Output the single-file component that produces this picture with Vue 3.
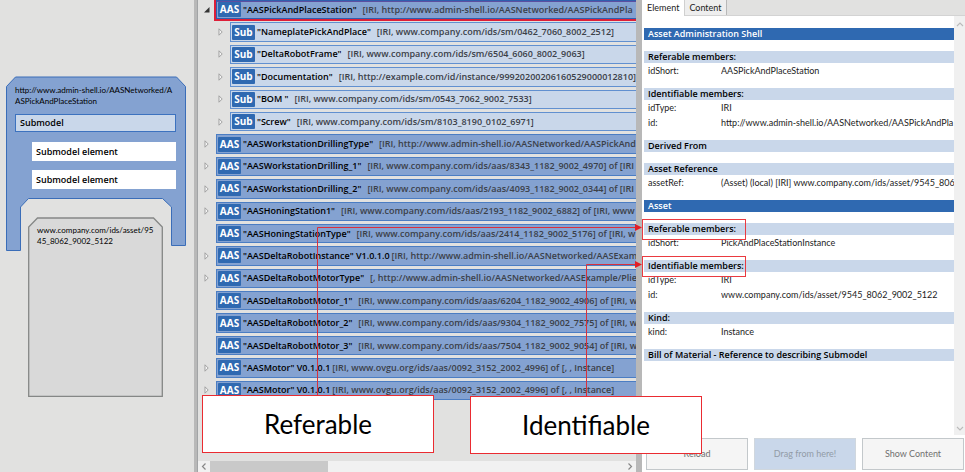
<script setup>
import { ref } from 'vue'

const tree = [
  { kind: 'AAS', name: '"AASPickAndPlaceStation"', info: '[IRI, http://www.admin-shell.io/AASNetworked/AASPickAndPla', state: 'open', selected: true },
  { kind: 'Sub', name: '"NameplatePickAndPlace"', info: '[IRI, www.company.com/ids/sm/0462_7060_8002_2512]', state: 'closed' },
  { kind: 'Sub', name: '"DeltaRobotFrame"', info: '[IRI, www.company.com/ids/sm/6504_6060_8002_9063]', state: 'closed' },
  { kind: 'Sub', name: '"Documentation"', info: '[IRI, http://example.com/id/instance/99920200206160529000012810]', state: 'closed' },
  { kind: 'Sub', name: '"BOM "', info: '[IRI, www.company.com/ids/sm/0543_7062_9002_7533]', state: 'closed' },
  { kind: 'Sub', name: '"Screw"', info: '[IRI, www.company.com/ids/sm/8103_8190_0102_6971]', state: 'closed' },
  { kind: 'AAS', name: '"AASWorkstationDrillingType"', info: '[IRI, http://www.admin-shell.io/AASNetworked/AASPickAnd', state: 'closed' },
  { kind: 'AAS', name: '"AASWorkstationDrilling_1"', info: '[IRI, www.company.com/ids/aas/8343_1182_9002_4970] of [IRI', state: 'closed' },
  { kind: 'AAS', name: '"AASWorkstationDrilling_2"', info: '[IRI, www.company.com/ids/aas/4093_1182_9002_0344] of [IRI', state: 'closed' },
  { kind: 'AAS', name: '"AASHoningStation1"', info: '[IRI, www.company.com/ids/aas/2193_1182_9002_6882] of [IRI, www', state: 'closed' },
  { kind: 'AAS', name: '"AASHoningStationType"', info: '[IRI, www.company.com/ids/aas/2414_1182_9002_5176] of [IRI, w', state: 'leaf' },
  { kind: 'AAS', name: '"AASDeltaRobotInstance" V1.0.1.0', tight: true, info: '[IRI, http://www.admin-shell.io/AASNetworked/AASExam', state: 'closed' },
  { kind: 'AAS', name: '"AASDeltaRobotMotorType"', info: '[, http://www.admin-shell.io/AASNetworked/AASExample/Plie', state: 'closed' },
  { kind: 'AAS', name: '"AASDeltaRobotMotor_1"', info: '[IRI, www.company.com/ids/aas/6204_1182_9002_4906] of [IRI, w', state: 'leaf' },
  { kind: 'AAS', name: '"AASDeltaRobotMotor_2"', info: '[IRI, www.company.com/ids/aas/9304_1182_9002_7575] of [IRI, w', state: 'leaf' },
  { kind: 'AAS', name: '"AASDeltaRobotMotor_3"', info: '[IRI, www.company.com/ids/aas/7504_1182_9002_9054] of [IRI, w', state: 'leaf' },
  { kind: 'AAS', name: '"AASMotor" V0.1.0.1', tight: true, info: '[IRI, www.ovgu.org/ids/aas/0092_3152_2002_4996] of [, , Instance]', state: 'closed' },
  { kind: 'AAS', name: '"AASMotor" V0.1.0.1', tight: true, info: '[IRI, www.ovgu.org/ids/aas/0092_3152_2002_4996] of [, , Instance]', state: 'closed' },
]

const groups = [
  {
    title: 'Asset Administration Shell',
    sections: [
      { title: 'Referable members:', rows: [['idShort:', 'AASPickAndPlaceStation']] },
      { title: 'Identifiable members:', rows: [['idType:', 'IRI'], ['id:', 'http://www.admin-shell.io/AASNetworked/AASPickAndPla']] },
      { title: 'Derived From', rows: [] },
      { title: 'Asset Reference', rows: [['assetRef:', '(Asset) (local) [IRI] www.company.com/ids/asset/9545_8062']] },
    ],
  },
  {
    title: 'Asset',
    sections: [
      { title: 'Referable members:', marked: true, rows: [['idShort:', 'PickAndPlaceStationInstance']] },
      { title: 'Identifiable members:', marked: true, rows: [['idType:', 'IRI'], ['id:', 'www.company.com/ids/asset/9545_8062_9002_5122']] },
      { title: 'Kind:', rows: [['kind:', 'Instance']] },
      { title: 'Bill of Material - Reference to describing Submodel', rows: [] },
    ],
  },
]

const tab = ref('Element')
</script>

<template>
  <main class="app">
    <aside class="diagram">
      <section class="shell">
        <svg class="outline" viewBox="0 0 180 176" preserveAspectRatio="none" aria-hidden="true">
          <path d="M0.5 174.5V10.5L9.5 1H170.5L179.5 10.5V169.5H165.5V131L156.5 122.5H22.5L14.5 131V174.5Z" fill="#84a2d1" stroke="#3a6db8" />
        </svg>
        <p class="url">http://www.admin-shell.io/AASNetworked/A<br>ASPickAndPlaceStation</p>
        <div class="submodel">Submodel</div>
        <div class="element">Submodel element</div>
        <div class="element">Submodel element</div>
      </section>
      <section class="asset">
        <svg class="outline" viewBox="0 0 135 180" preserveAspectRatio="none" aria-hidden="true">
          <path d="M0.7 179.3V10L9.5 1H125.5L134.3 10V179.3Z" fill="#d9d9d9" stroke="#858786" stroke-width="1.3" />
        </svg>
        <p class="url">www.company.com/ids/asset/95<br>45_8062_9002_5122</p>
      </section>
    </aside>

    <div class="splitter left"></div>

    <section class="explorer">
      <ul class="tree">
        <li v-for="(n, i) in tree" :key="i" class="node" :class="[n.kind.toLowerCase(), { selected: n.selected }]">
          <svg class="toggle" viewBox="0 0 8 10" aria-hidden="true">
            <path v-if="n.state === 'open'" d="M6.5 2V7.5H1Z" fill="#333" />
            <path v-else-if="n.state === 'closed'" d="M2 1.8V8.2L5.2 5Z" fill="#f6f6f6" stroke="#999" stroke-width="0.9" />
          </svg>
          <div class="bar">
            <span class="badge">{{ n.kind }}</span>
            <span class="name" :class="{ tight: n.tight }">{{ n.name }}</span>
            <span class="info">{{ n.info }}</span>
          </div>
        </li>
      </ul>
      <div class="hscroll">
        <svg class="arrow" viewBox="0 0 12 11" aria-hidden="true"><path d="M7.5 2.5L4.5 5.5L7.5 8.5" fill="none" stroke="#888" stroke-width="1.2" /></svg>
        <div class="thumb"></div>
        <svg class="arrow" viewBox="0 0 12 11" aria-hidden="true"><path d="M4.5 2.5L7.5 5.5L4.5 8.5" fill="none" stroke="#888" stroke-width="1.2" /></svg>
      </div>
    </section>

    <div class="splitter"></div>

    <section class="details">
      <nav class="tabs">
        <button v-for="t in ['Element', 'Content']" :key="t" class="tab" :class="{ active: tab === t }" type="button" @click="tab = t">{{ t }}</button>
      </nav>
      <div class="pane">
        <div class="sheet">
          <template v-for="g in groups" :key="g.title">
            <h2 class="group">{{ g.title }}</h2>
            <section v-for="s in g.sections" :key="s.title" class="block">
              <h3 class="band" :class="{ marked: s.marked }">{{ s.title }}</h3>
              <dl v-if="s.rows.length" class="props">
                <template v-for="r in s.rows" :key="r[0]">
                  <dt>{{ r[0] }}</dt>
                  <dd>{{ r[1] }}</dd>
                </template>
              </dl>
            </section>
          </template>
        </div>
        <div class="vscroll">
          <svg viewBox="0 0 11 12" aria-hidden="true"><path d="M3 8L6 5L9 8" fill="none" stroke="#bbb" stroke-width="1.1" /></svg>
          <svg viewBox="0 0 11 12" aria-hidden="true"><path d="M3 4L6 7L9 4" fill="none" stroke="#bbb" stroke-width="1.1" /></svg>
        </div>
      </div>
      <footer class="actions">
        <button class="action" type="button">Reload</button>
        <button class="action drag" type="button">Drag from here!</button>
        <button class="action" type="button">Show Content</button>
      </footer>
    </section>

    <svg class="links" viewBox="0 0 965 472" aria-hidden="true">
      <g fill="none" stroke="#d8303c">
        <path d="M317.5 396V227.5H636" />
        <path d="M586.5 397V264.5H636" />
      </g>
      <path d="M635 224L642 227.5L635 231ZM635 261L642 264.5L635 268Z" fill="#e31e26" />
    </svg>
    <div class="callout referable">Referable</div>
    <div class="callout identifiable">Identifiable</div>
  </main>
</template>

<style>
body { margin: 0; }
</style>

<style scoped>
* { box-sizing: border-box; }
.app {
  position: relative;
  display: grid;
  grid-template-columns: 194px 4px minmax(0, 1fr) 6px 323px;
  height: 100vh;
  overflow: hidden;
  background: #e1e1e0;
  color: #1c1c1c;
  font: 9px/12px "Open Sans", "Noto Sans", sans-serif;
}
h2, h3, p, ul, dl, dd { margin: 0; padding: 0; font-size: 9px; }
.splitter { background: #b8b8b8; }
.splitter.left { border-right: 1px solid #a2a4a6; }

/* Overview diagram */
.diagram { padding: 76px 8px 0 6px; }
.outline { position: absolute; inset: 0; width: 100%; height: 100%; z-index: -1; }
.shell, .asset { position: relative; z-index: 0; }
.shell { height: 176px; padding: 9px 10px 0 9px; display: flex; flex-direction: column; }
.url { font-family: Lato, "Open Sans", sans-serif; font-size: 8px; line-height: 11px; white-space: nowrap; color: #000; }
.submodel, .element { font-weight: 600; color: #000; display: flex; align-items: center; padding-left: 4px; }
.submodel { height: 18px; margin-top: 7px; background: #c9d7ea; border: 1px solid #3c72bf; }
.element { height: 19px; margin: 10px 0 0 17px; background: #fff; }
.element + .element { margin-top: 9px; }
.asset { height: 180px; margin: -35px 23px 0 22px; padding: 8px 9px; }

/* Tree */
.explorer { display: flex; flex-direction: column; min-width: 0; overflow: hidden; }
.tree { flex: 1; display: flex; flex-direction: column; gap: 3px; list-style: none; margin-bottom: 61px; }
.node { flex: 1; display: flex; align-items: center; padding-left: 5px; min-height: 0; }
.node.sub { padding-left: 19px; }
.toggle { width: 8px; height: 10px; flex: none; margin-right: 5px; }
.bar {
  flex: 1; align-self: stretch; min-width: 0; display: flex; align-items: center;
  padding-left: 1px; overflow: hidden; white-space: pre; font-weight: 600;
  background: #84a2d1; border: 1px solid #4b7dc3; border-right: 0;
}
.sub .bar { background: #c9d7ea; border-color: #6190d0; }
.selected .bar { box-shadow: inset 0 1px #5c4fa0; border-color: #2f5fae; outline: 2px solid #dd1f38; }
.badge {
  flex: none; width: 23px; height: 15px; margin-right: 2px; border-radius: 1px;
  background: #2f69b1; color: #fff; font-size: 10px; line-height: 15px; font-weight: 700; text-align: center;
}
.name { color: #000; margin-right: 6px; }
.name.tight { margin-right: 2px; }
.info { color: #3b4048; }
.hscroll { display: flex; height: 11px; background: #f1f1f1; }
.arrow { width: 12px; height: 11px; }
.thumb { width: 27%; margin-right: auto; background: #c9c9c9; }

/* Details */
.details { display: flex; flex-direction: column; min-width: 0; background: #fff; }
.tabs { display: flex; height: 16px; background: #e1e1e0; border-bottom: 1px solid #d3d3d3; }
.tab {
  font: 9px/12px Lato, "Open Sans", sans-serif; color: #222; height: 15px; padding: 0 4px; background: #eeeeee;
  border: 0; border-right: 1px solid #b8b8b8;
}
.tab.active { background: #fff; height: 16px; padding: 0 5px; border-right-color: #d0d0d0; }
.pane { flex: 1; display: flex; min-height: 0; }
.sheet { flex: 1; min-width: 0; padding: 12px 0 0 2px; overflow: hidden; }
.group, .band { height: 12px; line-height: 12px; padding-left: 4px; font-weight: 600; }
.group { background: #2f69b1; color: #fff; margin-bottom: 11px; }
.band { background: #c9d7ea; color: #000; position: relative; }
.band.marked::after {
  content: ""; position: absolute; left: -2px; top: -4px; width: 102px; height: 19px; border: 1px solid #ea3a40;
}
.block { margin-bottom: 11px; }
.block:has(.props) { margin-bottom: 9px; }
.props {
  display: grid; grid-template-columns: 73px minmax(0, 1fr); grid-auto-rows: 14px; row-gap: 1px;
  font-family: Lato, "Open Sans", sans-serif; line-height: 14px; padding: 1px 0 1px 4px; white-space: nowrap;
}
.props dd { overflow: hidden; }
.vscroll { width: 11px; background: #f0f0f0; display: flex; flex-direction: column; justify-content: space-between; padding-top: 2px; }
.vscroll svg { width: 11px; height: 12px; }
.actions { display: grid; grid-template-columns: repeat(3, minmax(0, 1fr)); gap: 6px; padding: 3px 1px 2px 4px; }
.action { font: 9px/12px Lato, "Open Sans", sans-serif; height: 32px; color: #707070; background: #f5f5f5; border: 1px solid #c3c8cb; padding: 0; }
.action.drag { background: #c9d7ea; color: #929ba7; border-color: #d0d7de; }

/* Annotations */
.links { position: absolute; left: 0; top: 0; width: 965px; height: 472px; pointer-events: none; }
.callout {
  position: absolute; width: 232px; height: 58px; display: flex; align-items: center; justify-content: center;
  background: #fff; border: 1px solid #ea2b31; color: #000; font: 26px/32px Lato, sans-serif;
}
.referable { left: 202px; top: 395px; }
.identifiable { left: 470px; top: 396px; }
</style>
